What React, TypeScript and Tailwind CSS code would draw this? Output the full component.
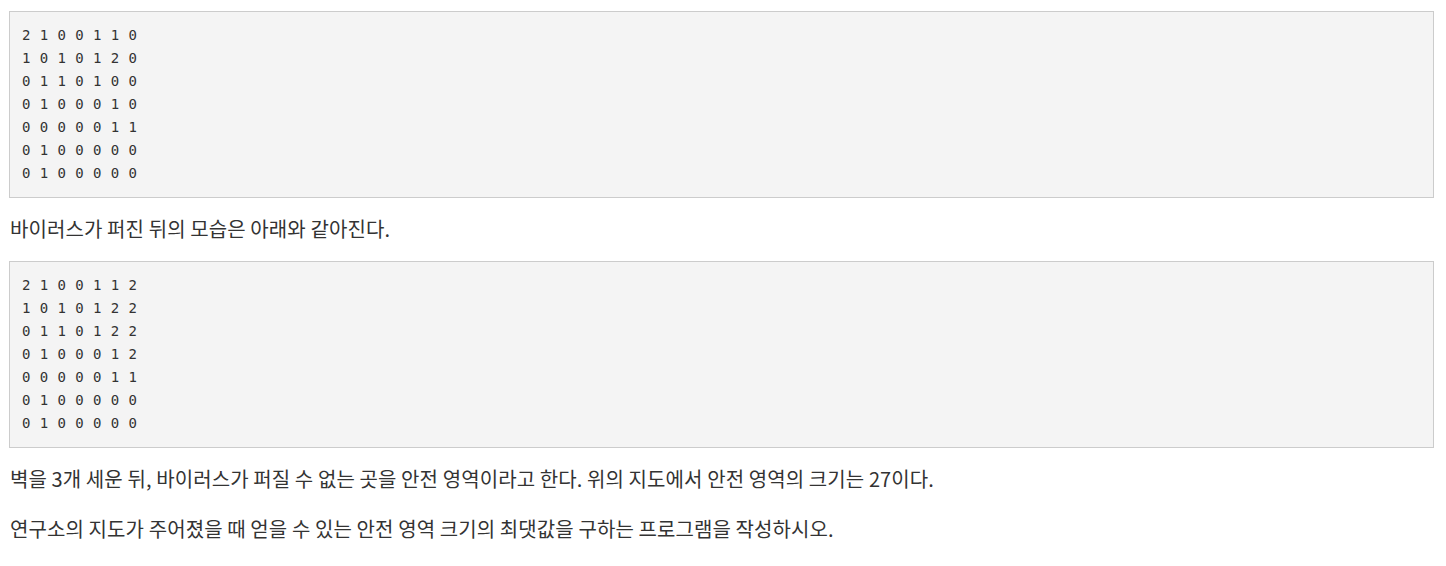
import React from "react";

const before = [
  "2 1 0 0 1 1 0",
  "1 0 1 0 1 2 0",
  "0 1 1 0 1 0 0",
  "0 1 0 0 0 1 0",
  "0 0 0 0 0 1 1",
  "0 1 0 0 0 0 0",
  "0 1 0 0 0 0 0",
];

const after = [
  "2 1 0 0 1 1 2",
  "1 0 1 0 1 2 2",
  "0 1 1 0 1 2 2",
  "0 1 0 0 0 1 2",
  "0 0 0 0 0 1 1",
  "0 1 0 0 0 0 0",
  "0 1 0 0 0 0 0",
];

const Grid: React.FC<{ rows: string[] }> = ({ rows }) => (
  <pre className="mb-[14px] border border-[#cccccc] bg-[#f4f4f4] p-[12px] font-['DejaVu_Sans_Mono',monospace] text-[14px] leading-[23px] tracking-[0.45px] text-[#333333]">
    {rows.join("\n")}
  </pre>
);

export default function App() {
  return (
    <div className="min-h-screen bg-white pl-[9px] pr-[12px] pt-[11px] font-['Noto_Sans_CJK_KR','Noto_Sans',sans-serif] text-[20px] leading-[34px] tracking-[0.1px] text-[#333333]">
      <Grid rows={before} />
      <p className="mb-[15px] pl-px">바이러스가 퍼진 뒤의 모습은 아래와 같아진다.</p>
      <Grid rows={after} />
      <p className="mb-[16px] pl-px">
        벽을 3개 세운 뒤, 바이러스가 퍼질 수 없는 곳을 안전 영역이라고 한다. 위의 지도에서 안전 영역의 크기는 27이다.
      </p>
      <p className="pl-px">연구소의 지도가 주어졌을 때 얻을 수 있는 안전 영역 크기의 최댓값을 구하는 프로그램을 작성하시오.</p>
    </div>
  );
}
